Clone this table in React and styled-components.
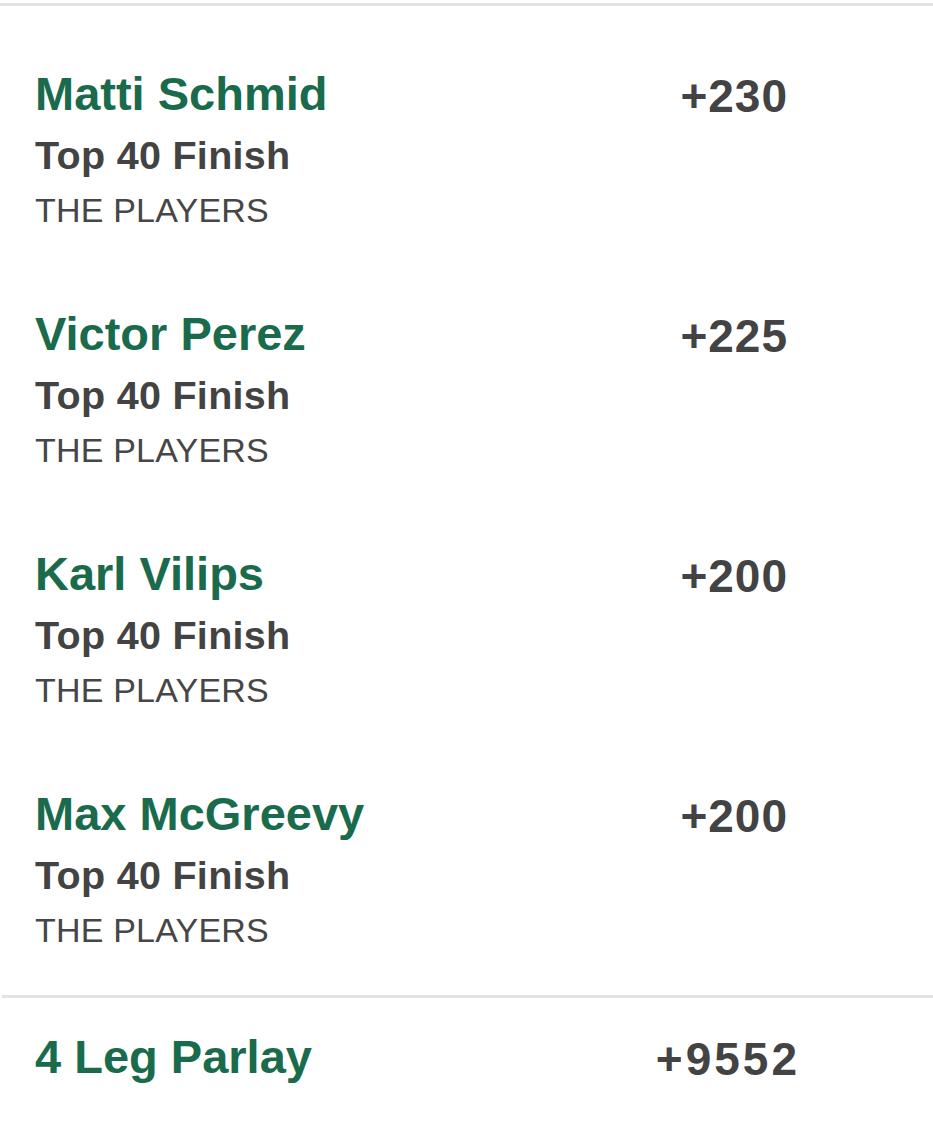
import React from "react";
import styled, { createGlobalStyle } from "styled-components";

const Global = createGlobalStyle`
  html, body { margin: 0; padding: 0; background: #ffffff; }
  body { font-family: "Liberation Sans", Arial, sans-serif; }
`;

const Page = styled.div`
  width: 933px;
  min-height: 1124px;
  background: #ffffff;
  padding-top: 3px;
  box-sizing: border-box;
`;

const Rule = styled.div`
  height: 3px;
  background: #e3e3e3;
  margin-left: ${(p) => p.$inset || 0}px;
`;

const Legs = styled.div`
  display: flex;
  flex-direction: column;
  gap: 70px;
  padding: 58px 0 41px 35px;
`;

const Row = styled.div`
  display: grid;
  grid-template-columns: 1fr auto;
  align-items: start;
  padding-right: ${(p) => p.$right}px;
`;

const Info = styled.div`
  display: flex;
  flex-direction: column;
`;

const Name = styled.div`
  font-size: 47px;
  line-height: 60px;
  font-weight: 700;
  color: #196b4c;
  white-space: nowrap;
`;

const Market = styled.div`
  font-size: 39.5px;
  line-height: 62px;
  font-weight: 700;
  color: #434343;
  letter-spacing: 0.3px;
`;

const Event = styled.div`
  font-size: 34px;
  line-height: 48px;
  font-weight: 400;
  color: #464646;
  letter-spacing: 0.2px;
`;

const Odds = styled.div`
  font-size: 46px;
  line-height: 60px;
  font-weight: 700;
  color: #434343;
  padding-top: 2px;
  letter-spacing: ${(p) => p.$spacing}px;
`;

const Parlay = styled.div`
  padding: 29px 0 37px 35px;
`;

const legs = [
  { name: "Matti Schmid", odds: "+230" },
  { name: "Victor Perez", odds: "+225" },
  { name: "Karl Vilips", odds: "+200" },
  { name: "Max McGreevy", odds: "+200" },
];

export default function App() {
  return (
    <Page>
      <Global />
      <Rule />
      <Legs>
        {legs.map((l) => (
          <Row key={l.name} $right={145}>
            <Info>
              <Name>{l.name}</Name>
              <Market>Top 40 Finish</Market>
              <Event>THE PLAYERS</Event>
            </Info>
            <Odds $spacing={1}>{l.odds}</Odds>
          </Row>
        ))}
      </Legs>
      <Rule $inset={2} />
      <Parlay>
        <Row $right={133}>
          <Name>4 Leg Parlay</Name>
          <Odds $spacing={3}>+9552</Odds>
        </Row>
      </Parlay>
    </Page>
  );
}
